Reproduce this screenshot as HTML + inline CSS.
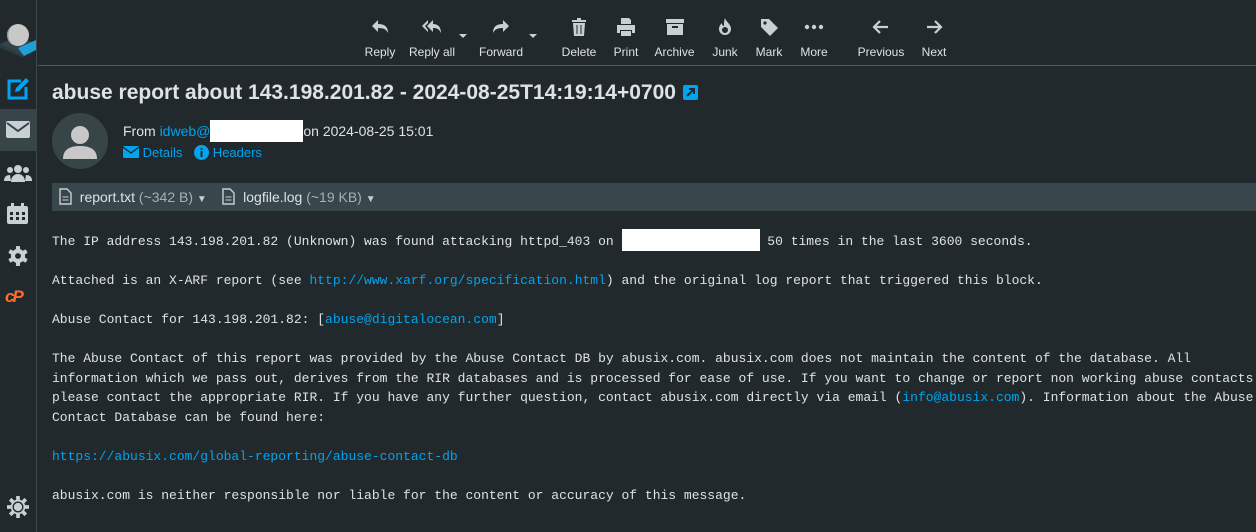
<!DOCTYPE html>
<html><head><style>
*{margin:0;padding:0;box-sizing:border-box}
body{width:1256px;height:532px;background:#21292c;font-family:"Liberation Sans",sans-serif;color:#dee2e6;overflow:hidden;position:relative}
.side{position:absolute;left:0;top:0;width:37px;height:532px;background:#21292c;border-right:1px solid #3b4a50}
.sel{position:absolute;left:0;top:109px;width:37px;height:42px;background:#374549}
.tb{position:absolute;left:38px;right:0;top:0;height:66px;border-bottom:1px solid #4a5a60}
.btn{position:absolute;top:17px;text-align:center;font-size:12px;color:#dee2e6}
.btn svg{display:block;margin:0 auto 8px;width:20px;height:20px}
.caret{position:absolute;top:34px;width:0;height:0;border-left:4px solid transparent;border-right:4px solid transparent;border-top:4px solid #c9d0d4}
h1{position:absolute;left:52px;top:81px;font-size:21px;font-weight:bold;color:#dee2e6;white-space:nowrap}
.ext{display:inline-block;width:15px;height:15px;background:#00a4f0;border-radius:2px;vertical-align:-1px;margin-left:7px;position:relative}
.av{position:absolute;left:52px;top:113px;width:56px;height:56px;border-radius:50%;background:#374549;overflow:hidden}
.from{position:absolute;left:123px;top:120px;font-size:14px}
a,.lk{color:#00a4f0;text-decoration:none}
.hdr{position:absolute;left:123px;top:145px;font-size:13px;color:#00a4f0}
.att{position:absolute;left:52px;right:0;top:183px;height:28px;background:#37474c;font-size:14px}
.body{position:absolute;left:52px;top:229px;font-family:"Liberation Mono",monospace;font-size:13px;line-height:19.5px;white-space:pre;color:#dee2e6}
</style></head><body>
<div class="side">
 <svg style="position:absolute;left:0;top:18px" width="36" height="40" viewBox="0 0 36 40"><polygon points="0,26 18,18 36,26 24,38" fill="#33434a"/><polygon points="18,30 36,22 36,32 24,38" fill="#1e9fd8"/><polygon points="0,26 24,38 24,40 0,30" fill="#2b3a40"/><circle cx="18" cy="17" r="11" fill="#c8c8c8"/><path d="M12 8 A11 11 0 0 0 13 27 A13 13 0 0 1 12 8z" fill="#9a9a9a"/></svg>
 <svg style="position:absolute;left:6px;top:78px" width="24" height="22" viewBox="0 0 24 22"><path d="M15 3H3v17h17V9" fill="none" stroke="#00a4f0" stroke-width="3"/><path d="M9 14l1-4 10-10 3 3-10 10z" fill="#00a4f0"/></svg>
 <div class="sel"></div>
 <svg style="position:absolute;left:6px;top:121px" width="24" height="17" viewBox="0 0 24 17"><rect width="24" height="17" rx="2" fill="#c9d0d4"/><path d="M1 2l11 8 11-8" fill="none" stroke="#374549" stroke-width="2"/></svg>
 <svg style="position:absolute;left:4px;top:163px" width="28" height="20" viewBox="0 0 28 20"><g fill="#c9d0d4"><circle cx="14" cy="6" r="4"/><circle cx="6" cy="7" r="3"/><circle cx="22" cy="7" r="3"/><path d="M7 19c0-5 3-8 7-8s7 3 7 8z"/><path d="M0 18c0-4 2-6 6-6l1 6z"/><path d="M28 18c0-4-2-6-6-6l-1 6z"/></g></svg>
 <svg style="position:absolute;left:7px;top:203px" width="21" height="21" viewBox="0 0 21 21"><rect x="0" y="3" width="21" height="18" rx="2" fill="#c9d0d4"/><rect x="4" y="0" width="3" height="5" fill="#c9d0d4"/><rect x="14" y="0" width="3" height="5" fill="#c9d0d4"/><g fill="#21292c"><rect x="3" y="9" width="3" height="3"/><rect x="9" y="9" width="3" height="3"/><rect x="15" y="9" width="3" height="3"/><rect x="3" y="14" width="3" height="3"/><rect x="9" y="14" width="3" height="3"/><rect x="15" y="14" width="3" height="3"/></g></svg>
 <svg style="position:absolute;left:8px;top:246px" width="20" height="20" viewBox="0 0 24 24"><g fill="#c9d0d4"><circle cx="12" cy="12" r="8.5"/><rect x="9.5" y="0" width="5" height="24" rx="1"/><rect x="9.5" y="0" width="5" height="24" rx="1" transform="rotate(60 12 12)"/><rect x="9.5" y="0" width="5" height="24" rx="1" transform="rotate(120 12 12)"/></g><circle cx="12" cy="12" r="3.5" fill="#21292c"/></svg>
 <div style="position:absolute;left:5px;top:287px;color:#ff6c2c;font-weight:bold;font-style:italic;font-size:17px;letter-spacing:-2px">cP</div>
 <svg style="position:absolute;left:7px;top:496px" width="22" height="22" viewBox="0 0 24 24"><g fill="#c9d0d4"><circle cx="12" cy="12" r="8"/><rect x="10" y="0" width="4" height="24"/><rect x="10" y="0" width="4" height="24" transform="rotate(45 12 12)"/><rect x="10" y="0" width="4" height="24" transform="rotate(90 12 12)"/><rect x="10" y="0" width="4" height="24" transform="rotate(135 12 12)"/></g><circle cx="12" cy="12" r="6" fill="#21292c"/><circle cx="12" cy="12" r="4.5" fill="#c9d0d4"/></svg>
</div>
<div class="tb"></div>
<div class="btn" style="left:364px;width:32px"><svg viewBox="0 0 20 20"><path d="M8 3L2 9l6 6v-4c5 0 8 1 10 5 0-6-3-9-10-9z" fill="#c9d0d4"/></svg>Reply</div>
<div class="btn" style="left:405px;width:54px"><svg viewBox="0 0 20 20"><path d="M6 3L0 9l6 6v-2L3 9l3-3zM11 3L5 9l6 6v-4c4 0 6 1 8 5 0-6-3-9-8-9z" fill="#c9d0d4"/></svg>Reply all</div>
<div class="caret" style="left:459px"></div>
<div class="btn" style="left:475px;width:52px"><svg viewBox="0 0 20 20"><path d="M12 3l6 6-6 6v-4c-5 0-8 1-10 5 0-6 3-9 10-9z" fill="#c9d0d4"/></svg>Forward</div>
<div class="caret" style="left:529px"></div>
<div class="btn" style="left:559px;width:40px"><svg viewBox="0 0 20 20"><path d="M3 3h14v2H3zM8 1h4v2H8zM4 6h12l-1 13H5z" fill="#c9d0d4"/><path d="M8 8v9M12 8v9" stroke="#21292c"/></svg>Delete</div>
<div class="btn" style="left:610px;width:32px"><svg viewBox="0 0 20 20"><path d="M5 1h8l2 2v4H5zM1 8h18v8h-3v-3H4v3H1zM5 14h10v5H5z" fill="#c9d0d4"/></svg>Print</div>
<div class="btn" style="left:652px;width:45px"><svg viewBox="0 0 20 20"><path d="M1 2h18v4H1zM2 7h16v11H2z" fill="#c9d0d4"/><path d="M7 10h6" stroke="#21292c" stroke-width="2"/></svg>Archive</div>
<div class="btn" style="left:709px;width:32px"><svg viewBox="0 0 20 20"><path d="M10 1c1 4 6 6 6 11a6 6 0 0 1-12 0c0-3 2-5 3-6 0 2 1 3 2 3 0-3 0-5 1-8z" fill="#c9d0d4"/><circle cx="10" cy="13" r="3" fill="#21292c"/></svg>Junk</div>
<div class="btn" style="left:753px;width:32px"><svg viewBox="0 0 20 20"><path d="M2 2h8l9 9-8 8-9-9z" fill="#c9d0d4"/><circle cx="6" cy="6" r="1.6" fill="#21292c"/></svg>Mark</div>
<div class="btn" style="left:798px;width:32px"><svg viewBox="0 0 20 20"><circle cx="3" cy="10" r="2.2" fill="#c9d0d4"/><circle cx="10" cy="10" r="2.2" fill="#c9d0d4"/><circle cx="17" cy="10" r="2.2" fill="#c9d0d4"/></svg>More</div>
<div class="btn" style="left:855px;width:52px"><svg viewBox="0 0 20 20"><path d="M17 10H3M9 4l-6 6 6 6" fill="none" stroke="#c9d0d4" stroke-width="2.2"/></svg>Previous</div>
<div class="btn" style="left:918px;width:32px"><svg viewBox="0 0 20 20"><path d="M3 10h14M11 4l6 6-6 6" fill="none" stroke="#c9d0d4" stroke-width="2.2"/></svg>Next</div>
<h1>abuse report about 143.198.201.82 - 2024-08-25T14:19:14+0700<span class="ext"><svg width="15" height="15" viewBox="0 0 15 15" style="position:absolute;left:0;top:0"><path d="M4 11l7-7M6 4h5v5" stroke="#21292c" stroke-width="2" fill="none"/></svg></span></h1>
<div class="av"><svg width="56" height="56" viewBox="0 0 56 56"><circle cx="28" cy="22" r="9" fill="#c8c8c8"/><path d="M11 46c0-9 6-13 17-13s17 4 17 13z" fill="#c8c8c8"/></svg></div>
<div class="from">From <span class="lk">idweb@</span><span style="display:inline-block;width:93px;height:22px;background:#fff;vertical-align:-6px"></span>on 2024-08-25 15:01</div>
<div class="hdr"><svg width="16" height="12" viewBox="0 0 16 12" style="vertical-align:-1px"><rect width="16" height="12" rx="1" fill="#00a4f0"/><path d="M0 1l8 6 8-6" fill="none" stroke="#21292c" stroke-width="1.3"/></svg> Details &nbsp; <svg width="15" height="15" viewBox="0 0 15 15" style="vertical-align:-3px;margin-left:1px"><circle cx="7.5" cy="7.5" r="7.5" fill="#00a4f0"/><rect x="6.5" y="6" width="2" height="6" fill="#21292c"/><circle cx="7.5" cy="4" r="1.1" fill="#21292c"/></svg> Headers</div>
<div class="att"><span style="position:absolute;left:7px;top:5px;white-space:nowrap"><svg width="13" height="17" viewBox="0 0 13 17" style="vertical-align:-3px"><path d="M1 1h7l4 4v11H1z" fill="none" stroke="#c9d0d4" stroke-width="1.4"/><path d="M3.5 9h6M3.5 12h6" stroke="#c9d0d4"/></svg>&nbsp; report.txt <span style="color:#a7b0b5">(~342 B)</span> <span style="font-size:10px;color:#c9d0d4">▼</span> &nbsp;&nbsp; <svg width="13" height="17" viewBox="0 0 13 17" style="vertical-align:-3px"><path d="M1 1h7l4 4v11H1z" fill="none" stroke="#c9d0d4" stroke-width="1.4"/><path d="M3.5 9h6M3.5 12h6" stroke="#c9d0d4"/></svg>&nbsp; logfile.log <span style="color:#a7b0b5">(~19 KB)</span> <span style="font-size:10px;color:#c9d0d4">▼</span></span></div>
<div class="body">The IP address 143.198.201.82 (Unknown) was found attacking httpd_403 on <span style="display:inline-block;width:138px;height:22px;background:#fff;vertical-align:-6px"></span> 50 times in the last 3600 seconds.

Attached is an X-ARF report (see <span class="lk">http://www.xarf.org/specification.html</span>) and the original log report that triggered this block.

Abuse Contact for 143.198.201.82: [<span class="lk">abuse@digitalocean.com</span>]

The Abuse Contact of this report was provided by the Abuse Contact DB by abusix.com. abusix.com does not maintain the content of the database. All
information which we pass out, derives from the RIR databases and is processed for ease of use. If you want to change or report non working abuse contacts
please contact the appropriate RIR. If you have any further question, contact abusix.com directly via email (<span class="lk">info@abusix.com</span>). Information about the Abuse
Contact Database can be found here:

<span class="lk">https://abusix.com/global-reporting/abuse-contact-db</span>

abusix.com is neither responsible nor liable for the content or accuracy of this message.</div>
</body></html>
